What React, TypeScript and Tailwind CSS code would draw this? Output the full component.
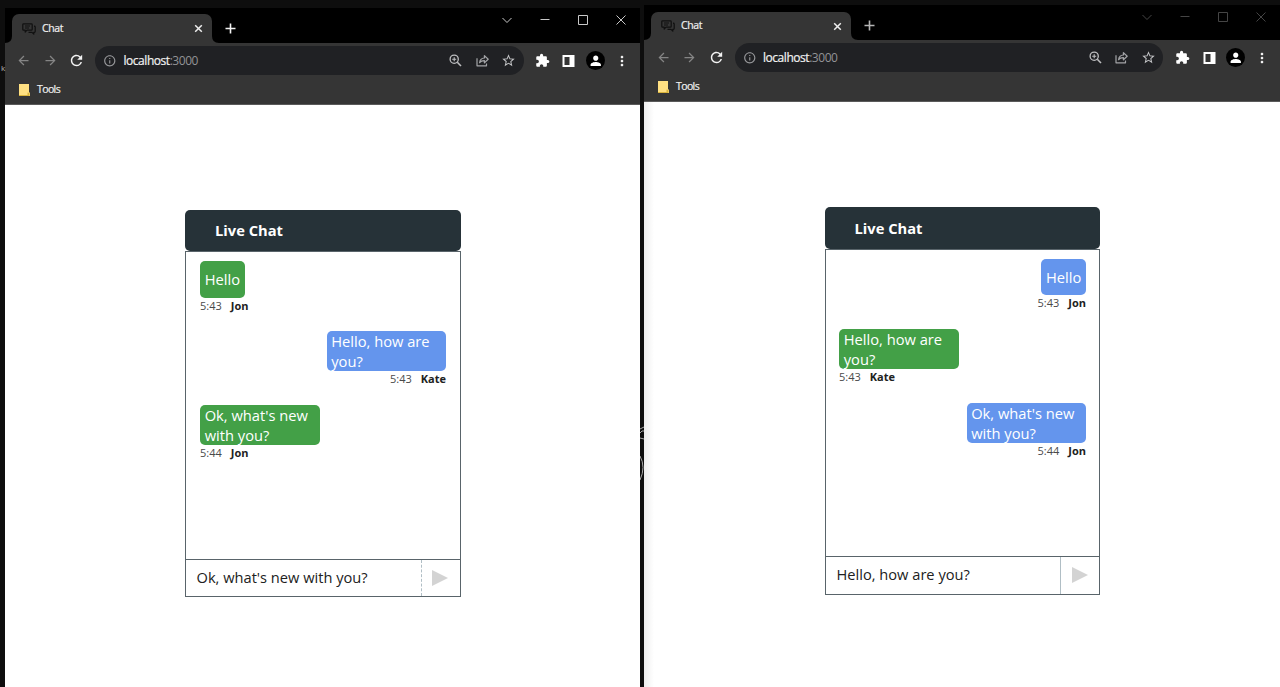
import React from "react";
import {
  MdArrowBack, MdArrowForward, MdRefresh, MdInfoOutline, MdStarOutline, MdExtension, MdPerson, MdMoreVert,
} from "react-icons/md";

type Message = { text: string; time: string; author: string; mine: boolean; short?: boolean };

function ChatIcon() {
  return (
    <svg width="14" height="12" viewBox="0 0 14 12" fill="none" stroke="#101010" strokeWidth="1.2" strokeLinejoin="round">
      <path d="M1.6.8h7.8q.8 0 .8.8v4.8q0 .8-.8.8H5L3.2 9V7.2H1.6q-.8 0-.8-.8V1.6q0-.8.8-.8z" />
      <path d="M3 3h5M3 5h4M12 3.2q1.2 0 1.2.8v4.6q0 .8-.8.8h-.6v1.8L10 9.4H6.5" />
    </svg>
  );
}

function ZoomIcon() {
  return (
    <svg width="13" height="13" viewBox="0 0 13 13" fill="none" stroke="#bdbec0">
      <circle cx="5.2" cy="5.2" r="4.1" strokeWidth="1.3" />
      <path d="M8.3 8.3l3.7 3.7" strokeWidth="1.6" />
      <path d="M5.2 3.2v4M3.2 5.2h4" strokeWidth="1.1" />
    </svg>
  );
}

function ShareIcon() {
  return (
    <svg width="13" height="13" viewBox="0 0 13 13" fill="none" stroke="#a3a4a7" strokeWidth="1.2" strokeLinejoin="round">
      <path d="M1 4.2v7.6h9.5V9.5" />
      <path d="M3.6 8.7q.4-4.5 4.8-4.7V1.6l3.8 3.6-3.8 3.6V6.6Q5.3 6.5 3.6 8.7z" />
    </svg>
  );
}

function Flare({ side }: { side: "left" | "right" }) {
  return (
    <svg
      className={side === "left" ? "absolute bottom-0 -left-[7px]" : "absolute bottom-0 -right-[7px]"}
      width="7" height="7" viewBox="0 0 7 7" fill="#353535"
    >
      <path d={side === "left" ? "M7 0v7H0Q7 7 7 0z" : "M0 0v7h7Q0 7 0 0z"} />
    </svg>
  );
}

const cell = "flex w-[26.5px] shrink-0 items-center justify-center";

function BrowserWindow({ active, children }: { active: boolean; children: React.ReactNode }) {
  return (
    <section className={active ? "mt-[8px] flex w-[635px] shrink-0 flex-col bg-white" : "mt-[5px] flex w-[636px] shrink-0 flex-col bg-white"}>
      <div className="flex h-[35px] items-end bg-black">
        <div className={active
          ? "relative ml-[7px] flex h-[29px] w-[200px] items-center rounded-t-[7px] bg-[#353535] pr-[9px] pl-[10px]"
          : "relative ml-[7px] flex h-[28px] w-[200px] items-center rounded-t-[7px] bg-[#353535] pr-[9px] pl-[10px]"}>
          <Flare side="left" />
          <ChatIcon />
          <span className="ml-[6px] flex-1 text-[10.5px] tracking-[-0.4px] text-[#f0f0f0] [-webkit-text-stroke:0.2px_#f0f0f0]">Chat</span>
          <svg width="9" height="9" viewBox="0 0 9 9" stroke="#eee" strokeWidth="1.5"><path d="M1.2 1.2l6.6 6.6M7.8 1.2L1.2 7.8" /></svg>
          <Flare side="right" />
        </div>
        <div className="ml-[13px] flex h-[29px] items-center">
          <svg width="11" height="11" viewBox="0 0 11 11" stroke={active ? "#f2f2f2" : "#b5b5b5"} strokeWidth="1.6"><path d="M5.5.5v10M.5 5.5h10" /></svg>
        </div>
        <div className={active ? "ml-auto flex h-full text-[#c8c8c8]" : "ml-auto flex h-full text-[#454545]"}>
          {["M.5 3l4.5 4.5L9.5 3", "M.5 4.5h9", "M.5.5h9v9h-9z", "M.5.5l9 9M9.5.5l-9 9"].map((d) => (
            <div key={d} className="flex h-[24px] w-[38px] items-center justify-center">
              <svg width="10" height="10" viewBox="0 0 10 10" fill="none" stroke="currentColor" strokeWidth="1"><path d={d} /></svg>
            </div>
          ))}
        </div>
      </div>
      <div className="flex h-[62px] flex-col border-b border-[#5a5a5a] bg-[#353535]">
        <div className={active ? "flex h-[35px] items-center pl-[5.5px]" : "flex h-[35px] items-center pl-[6px]"}>
          <span className={cell}><MdArrowBack size={15} color="#858585" /></span>
          <span className={cell}><MdArrowForward size={15} color="#858585" /></span>
          <span className={cell}><MdRefresh size={17} color="#f4f4f4" /></span>
          <div className="ml-[5px] flex h-[28.5px] w-[428.5px] shrink-0 items-center rounded-full bg-[#202124] pr-[1.5px] pl-[8px]">
            <MdInfoOutline size={13.5} color="#96979a" />
            <span className="ml-[7px] flex-1 text-[12px] tracking-[-0.46px] text-[#929396]">
              <span className="text-[#f1f1f1] [-webkit-text-stroke:0.2px_#f1f1f1]">localhost</span>:3000
            </span>
            <span className={cell}><ZoomIcon /></span>
            <span className={cell}><ShareIcon /></span>
            <span className={cell}><MdStarOutline size={15} color="#c4c5c7" /></span>
          </div>
          <div className={active ? "ml-[5.5px] flex" : "ml-[6.5px] flex"}>
            <span className={cell}><MdExtension size={15} color="#fff" /></span>
            <span className={cell}>
              <svg width="13" height="12" viewBox="0 0 13 12"><path fill="#fff" fillRule="evenodd" d="M.5 0h12v12H.5zM2.5 2v8h5V2z" /></svg>
            </span>
            <span className={cell}>
              <span className="flex size-[19px] items-center justify-center rounded-full bg-black"><MdPerson size={15.5} color="#fff" /></span>
            </span>
            <span className={cell}><MdMoreVert size={16} color="#f4f4f4" /></span>
          </div>
        </div>
        <div className="flex h-[23px] items-center pl-[14px]">
          <svg width="11" height="12" viewBox="0 0 11 12"><path fill="#ffe082" d="M0 0h10v8l1 1v3H0z" /><path fill="#d9b43c" d="M8.5 8.5l2 .5v3h-2zM0 11h10v1H0z" /></svg>
          <span className="ml-[7px] text-[10.5px] tracking-[-0.6px] text-[#f0f0f0] [-webkit-text-stroke:0.2px_#f0f0f0]">Tools</span>
        </div>
      </div>
      <div className={active ? "flex flex-1 flex-col pt-[105px] pl-[180px]" : "flex flex-1 flex-col bg-linear-to-r from-[#eeeeee] to-white to-[10px] pt-[105px] pl-[181px]"}>
        {children}
      </div>
    </section>
  );
}

function LiveChat({ messages, draft, wide }: { messages: Message[]; draft: string; wide: boolean }) {
  return (
    <div className={wide ? "w-[276px] text-[#212121]" : "w-[275px] text-[#212121]"}>
      <header className={wide
        ? "flex h-[41px] items-center rounded-[5px] bg-[#263238] pl-[30px] text-[14.7px] font-bold text-white"
        : "flex h-[41.5px] items-center rounded-[5px] bg-[#263238] pl-[29.5px] text-[14.7px] font-bold text-white"}>Live Chat</header>
      <div className={wide
        ? "flex h-[309px] flex-col border border-[#59646a] bg-white px-[14px] pt-[9px]"
        : "flex h-[308.5px] flex-col border border-[#59646a] bg-white px-[13px] pt-[9px]"}>
        {messages.map((m) => (
          <div key={m.text} className={m.mine ? "flex flex-col items-end" : "flex flex-col items-start"}>
            <div className={`${m.mine ? "bg-[#6495ed]" : "bg-[#43a047]"} ${m.short ? "h-[36.5px]" : "h-[40px] w-[119.5px]"} flex items-center rounded-[5px] px-[4.7px] text-[14.7px] leading-[20px] text-white`}>
              {m.text}
            </div>
            <div className={m.short ? "flex h-[33.5px] gap-[9px] text-[11px] leading-[15px]" : "flex h-[34px] gap-[9px] text-[11px] leading-[16px]"}>
              <span className="text-[#4a4a4a]">{m.time}</span>
              <b className="font-bold">{m.author}</b>
            </div>
          </div>
        ))}
      </div>
      <div className={wide ? "flex h-[37px] border border-t-0 border-[#59646a] bg-white" : "flex h-[37.5px] border border-t-0 border-[#59646a] bg-white"}>
        <span className="flex flex-1 items-center pb-px pl-[10.5px] text-[14.65px]">{draft}</span>
        <span className={wide ? "flex w-[39px] items-center border-l border-dashed border-[#b0bec5] pl-[10px]" : "flex w-[39px] items-center border-l border-[#b0bec5] pl-[11px]"}>
          <svg width="16" height="16" viewBox="0 0 16 16"><path d="M0 0l16 8-16 8z" fill="#d3d3d3" /></svg>
        </span>
      </div>
    </div>
  );
}

const log = [
  { text: "Hello", time: "5:43", author: "Jon", short: true },
  { text: "Hello, how are you?", time: "5:43", author: "Kate" },
  { text: "Ok, what's new with you?", time: "5:44", author: "Jon" },
];

export default function App() {
  return (
    <main className="relative flex h-[687px] w-[1280px] overflow-hidden bg-[#0e0e0e] pl-[5px] font-['Open_Sans',sans-serif]">
      <span className="absolute top-[62px] left-[1px] text-[8px] leading-[12px] text-[#bbb]">k</span>
      <BrowserWindow active>
        <LiveChat wide draft="Ok, what's new with you?" messages={log.map((m) => ({ ...m, mine: m.author === "Kate" }))} />
      </BrowserWindow>
      <div className="w-[4px] shrink-0 pt-[425px]">
        <svg width="4" height="60" viewBox="0 0 4 60" fill="none" stroke="#a8a8a8" strokeWidth="1">
          <path d="M0 4l4-2M0 8q2-3 4-2M0 13l4 1M0 31q6 11 0 24" />
        </svg>
      </div>
      <BrowserWindow active={false}>
        <LiveChat wide={false} draft="Hello, how are you?" messages={log.map((m) => ({ ...m, mine: m.author === "Jon" }))} />
      </BrowserWindow>
    </main>
  );
}
